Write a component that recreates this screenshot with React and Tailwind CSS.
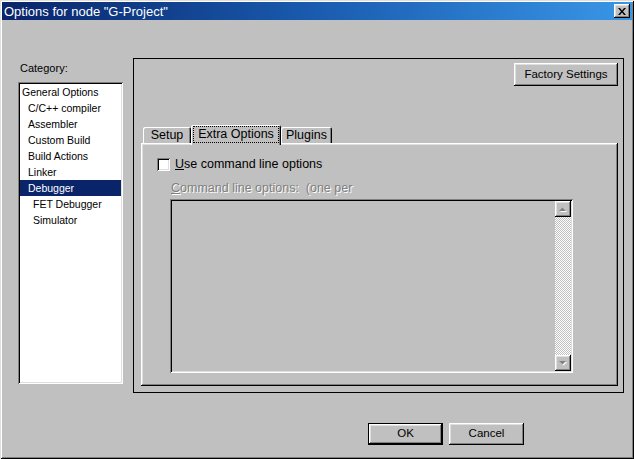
// App.jsx - "Options for node" dialog (classic Windows look)
import React, { useState } from 'react';

const raised = 'shadow-[inset_-1px_-1px_0_#000,inset_1px_1px_0_#fff,inset_-2px_-2px_0_#808080,inset_2px_2px_0_#dfdfdf]';
const sunken = 'shadow-[inset_1px_1px_0_#808080,inset_-1px_-1px_0_#fff,inset_2px_2px_0_#000,inset_-2px_-2px_0_#dfdfdf]';
const tabEdge = 'shadow-[inset_1px_1px_0_#fff,inset_-1px_0_0_#000,inset_-2px_0_0_#808080]';

const categories = [
  { label: 'General Options', indent: 0 },
  { label: 'C/C++ compiler', indent: 1 },
  { label: 'Assembler', indent: 1 },
  { label: 'Custom Build', indent: 1 },
  { label: 'Build Actions', indent: 1 },
  { label: 'Linker', indent: 1 },
  { label: 'Debugger', indent: 1 },
  { label: 'FET Debugger', indent: 2 },
  { label: 'Simulator', indent: 2 },
];

const indentCls = ['pl-[2px]', 'pl-[8px]', 'pl-[13px]'];

function Button({ children, isDefault, className = '' }) {
  return (
    <div className={`${isDefault ? 'border border-black' : ''} ${className}`}>
      <div className={`w-full h-full flex items-center justify-center bg-[#c0c0c0] text-[11.5px] text-black ${raised}`}>
        {children}
      </div>
    </div>
  );
}

function Arrow({ up }) {
  return (
    <div className={`w-[16px] h-[16px] flex items-center justify-center bg-[#c0c0c0] ${raised}`}>
      <svg width="8" height="5" viewBox="0 0 8 5">
        {up ? (
          <>
            <polygon points="4.5,1.5 8,5 1,5" fill="#fff" />
            <polygon points="3.5,0.5 7,4 0,4" fill="#808080" />
          </>
        ) : (
          <>
            <polygon points="1,1 8,1 4.5,4.5" fill="#fff" />
            <polygon points="0,0 7,0 3.5,3.5" fill="#808080" />
          </>
        )}
      </svg>
    </div>
  );
}

export default function App() {
  const [selected, setSelected] = useState('Debugger');
  const [useCmd, setUseCmd] = useState(false);

  return (
    <div
      className="w-[634px] h-[459px] bg-[#c0c0c0] p-[2px] flex flex-col text-black shadow-[inset_1px_1px_0_#dfdfdf,inset_-1px_-1px_0_#000,inset_2px_2px_0_#fff,inset_-2px_-2px_0_#808080]"
      style={{ fontFamily: '"Liberation Sans", Arial, sans-serif' }}
    >
      {/* title bar */}
      <div className="h-[18px] flex items-center justify-between pl-[2px] pr-[2px] bg-gradient-to-r from-[#0a246a] via-[#1a5cb0] to-[#3a96e6]">
        <span className="text-white text-[13px] leading-none">Options for node "G-Project"</span>
        <div className={`w-[16px] h-[14px] flex items-center justify-center bg-[#c0c0c0] ${raised}`}>
          <svg width="8" height="7" viewBox="0 0 8 7">
            <path d="M0 0h2l2 2.5L6 0h2L5 3.5 8 7H6L4 4.5 2 7H0l3-3.5z" fill="#000" />
          </svg>
        </div>
      </div>

      <div className="flex mt-[38px] pl-[16px]">
        {/* category list */}
        <div className="w-[105px] flex flex-col">
          <div className="mt-[3px] h-[14px] pl-[2px] text-[11px] leading-[14px]">Category:</div>
          <div className={`mt-[7px] h-[302px] bg-white p-[2px] ${sunken}`}>
            {categories.map((c) => {
              const active = c.label === selected;
              return (
                <div
                  key={c.label}
                  onClick={() => setSelected(c.label)}
                  className={`h-[16px] text-[10.5px] leading-[16px] ${indentCls[c.indent]} ${active ? 'bg-[#0a246a] text-white' : 'text-black'}`}
                >
                  {c.label}
                </div>
              );
            })}
          </div>
        </div>

        {/* right panel */}
        <div className="ml-[10px] w-[491px] h-[335px] border border-black flex flex-col pt-[4px] pl-[7px] pr-[5px] pb-[6px]">
          <div className="flex justify-end">
            <Button className="w-[104px] h-[23px]">Factory Settings</Button>
          </div>

          <div className="mt-[39px] h-[18px] flex items-end pl-[2px]">
            <div className={`w-[48px] h-[16px] flex items-center justify-center text-[12.5px] bg-[#c0c0c0] rounded-t-[2px] ${tabEdge}`}>
              Setup
            </div>
            <div className={`relative z-10 w-[90px] h-[20px] -mb-[2px] flex items-start justify-center pt-[1px] text-[12.5px] bg-[#c0c0c0] rounded-t-[2px] ${tabEdge}`}>
              <span className="border border-dotted border-black px-[4px] leading-[15px]">Extra Options</span>
            </div>
            <div className={`w-[51px] h-[16px] flex items-center justify-center text-[12.5px] bg-[#c0c0c0] rounded-t-[2px] ${tabEdge}`}>
              Plugins
            </div>
          </div>

          <div className={`flex-1 flex flex-col ${raised}`}>
            <label className="mt-[15px] ml-[16px] flex items-center h-[13px] cursor-default" onClick={() => setUseCmd(!useCmd)}>
              <span className={`w-[13px] h-[13px] bg-white flex items-center justify-center ${sunken}`}>
                {useCmd && (
                  <svg width="7" height="7" viewBox="0 0 7 7">
                    <path d="M0 3l2 2 5-5v2L2 7 0 5z" fill="#000" />
                  </svg>
                )}
              </span>
              <span className="ml-[5px] text-[12.5px] leading-none"><u>U</u>se command line options</span>
            </label>

            <div className="mt-[10px] ml-[30px] h-[14px] text-[12.5px] leading-[14px] text-[#808080] [text-shadow:1px_1px_0_#fff]">
              <u>C</u>ommand line options:&nbsp; (one per
            </div>

            <div className={`mt-[4px] ml-[29px] w-[403px] h-[174px] bg-[#c0c0c0] p-[2px] flex justify-end ${sunken}`}>
              <div className="w-[16px] flex flex-col">
                <Arrow up />
                <div className="flex-1 bg-[repeating-conic-gradient(#fff_0%_25%,#c0c0c0_0%_50%)] bg-[length:2px_2px]" />
                <Arrow />
              </div>
            </div>
          </div>
        </div>
      </div>

      <div className="mt-[30px] flex justify-end pr-[108px] gap-[6px]">
        <Button isDefault className="w-[75px] h-[22px]">OK</Button>
        <Button className="w-[75px] h-[22px]">Cancel</Button>
      </div>
    </div>
  );
}
